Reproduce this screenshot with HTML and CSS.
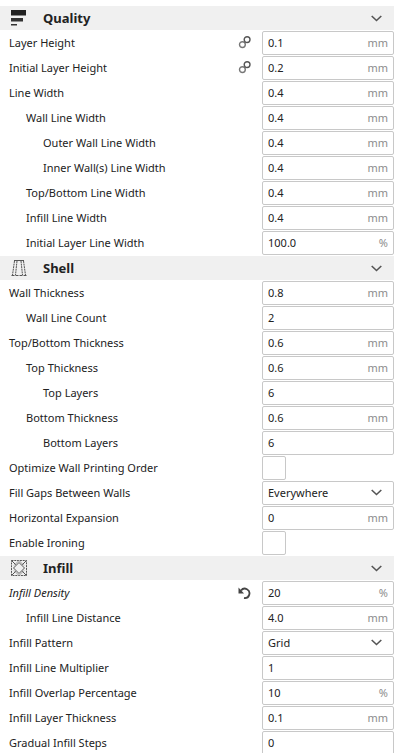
FILE: index.html
```html
<!DOCTYPE html>
<html lang="en">
<head>
  <meta charset="UTF-8" />
  <meta name="viewport" content="width=device-width, initial-scale=1" />
  <title>Print Settings</title>
  <link rel="stylesheet" href="styles.css">
</head>
<body>
  <svg class="defs" width="0" height="0">
    <symbol id="chev" viewBox="0 0 11 7"><path d="M.7 1 5.500 5.500 10.300 1" fill="none" stroke="#555" stroke-width="1.6"/></symbol>
    <symbol id="link" viewBox="0 0 13 13">
      <g fill="none" stroke-width="1.4">
        <circle cx="4.400" cy="8.600" r="2.900" stroke="#777"/>
        <circle cx="9.100" cy="3.600" r="2.900" stroke="#555"/>
      </g>
    </symbol>
  </svg>

  <div class="panel">
    <div class="section">
      <svg class="section-icon" viewBox="0 0 16 16">
        <rect x="0" y="0" width="15" height="5.500" fill="#222"/>
        <rect x="0" y="8" width="12" height="3.500" fill="#333"/>
        <rect x="0" y="14" width="6" height="1.500" fill="#333"/>
      </svg>
      <span class="section-title">Quality</span>
      <svg class="section-chev"><use href="#chev"/></svg>
    </div>
    <div class="row"><span class="label">Layer Height</span><svg class="action"><use href="#link"/></svg><div class="field"><span>0.1</span><em>mm</em></div></div>
    <div class="row"><span class="label">Initial Layer Height</span><svg class="action"><use href="#link"/></svg><div class="field"><span>0.2</span><em>mm</em></div></div>
    <div class="row"><span class="label">Line Width</span><div class="field"><span>0.4</span><em>mm</em></div></div>
    <div class="row"><span class="label l1">Wall Line Width</span><div class="field"><span>0.4</span><em>mm</em></div></div>
    <div class="row"><span class="label l2">Outer Wall Line Width</span><div class="field"><span>0.4</span><em>mm</em></div></div>
    <div class="row"><span class="label l2">Inner Wall(s) Line Width</span><div class="field"><span>0.4</span><em>mm</em></div></div>
    <div class="row"><span class="label l1">Top/Bottom Line Width</span><div class="field"><span>0.4</span><em>mm</em></div></div>
    <div class="row"><span class="label l1">Infill Line Width</span><div class="field"><span>0.4</span><em>mm</em></div></div>
    <div class="row"><span class="label l1">Initial Layer Line Width</span><div class="field"><span>100.0</span><em>%</em></div></div>

    <div class="section">
      <svg class="section-icon" viewBox="0 0 16 16">
        <g fill="none" stroke="#555" stroke-width="1">
          <path d="M3 .5H13"/>
          <path d="M3.500 1 1.500 15M12.500 1 14.500 15" stroke-dasharray="2 .6"/>
          <path d="M6 1 4.500 15M10 1 11.500 15" stroke-dasharray="2 .6"/>
          <path d="M.5 15.500H15.500" stroke-dasharray="3 1"/>
        </g>
      </svg>
      <span class="section-title">Shell</span>
      <svg class="section-chev"><use href="#chev"/></svg>
    </div>
    <div class="row"><span class="label">Wall Thickness</span><div class="field"><span>0.8</span><em>mm</em></div></div>
    <div class="row"><span class="label l1">Wall Line Count</span><div class="field"><span>2</span></div></div>
    <div class="row"><span class="label">Top/Bottom Thickness</span><div class="field"><span>0.6</span><em>mm</em></div></div>
    <div class="row"><span class="label l1">Top Thickness</span><div class="field"><span>0.6</span><em>mm</em></div></div>
    <div class="row"><span class="label l2">Top Layers</span><div class="field"><span>6</span></div></div>
    <div class="row"><span class="label l1">Bottom Thickness</span><div class="field"><span>0.6</span><em>mm</em></div></div>
    <div class="row"><span class="label l2">Bottom Layers</span><div class="field"><span>6</span></div></div>
    <div class="row"><span class="label">Optimize Wall Printing Order</span><div class="check"></div></div>
    <div class="row"><span class="label">Fill Gaps Between Walls</span><div class="field"><span>Everywhere</span><svg class="select-chev"><use href="#chev"/></svg></div></div>
    <div class="row"><span class="label">Horizontal Expansion</span><div class="field"><span>0</span><em>mm</em></div></div>
    <div class="row"><span class="label">Enable Ironing</span><div class="check"></div></div>

    <div class="section">
      <svg class="section-icon" viewBox="0 0 16 16">
        <g fill="none" stroke="#555" stroke-width="1">
          <rect x=".5" y=".5" width="15" height="15" stroke-dasharray="2 .8"/>
          <path d="M8 2.500 13.500 8 8 13.500 2.500 8Z"/>
          <path d="M.5 .5 5 5M15.500 .5 11 5M.5 15.500 5 11M15.500 15.500 11 11"/>
          <path d="M8 .5 3 5.500M8 .5 13 5.500M8 15.500 3 10.500M8 15.500 13 10.500" stroke="#999"/>
        </g>
      </svg>
      <span class="section-title">Infill</span>
      <svg class="section-chev"><use href="#chev"/></svg>
    </div>
    <div class="row"><span class="label changed">Infill Density</span>
      <svg class="action" viewBox="0 0 13 13">
        <path d="M3 4.500A4.700 4.700 0 1 1 6 12" fill="none" stroke="#444" stroke-width="1.800"/>
        <path d="M.5 1.500V7.500H6Z" fill="#444"/>
      </svg>
      <div class="field"><span>20</span><em>%</em></div></div>
    <div class="row"><span class="label l1">Infill Line Distance</span><div class="field"><span>4.0</span><em>mm</em></div></div>
    <div class="row"><span class="label">Infill Pattern</span><div class="field"><span>Grid</span><svg class="select-chev"><use href="#chev"/></svg></div></div>
    <div class="row"><span class="label">Infill Line Multiplier</span><div class="field"><span>1</span></div></div>
    <div class="row"><span class="label">Infill Overlap Percentage</span><div class="field"><span>10</span><em>%</em></div></div>
    <div class="row"><span class="label">Infill Layer Thickness</span><div class="field"><span>0.1</span><em>mm</em></div></div>
    <div class="row"><span class="label">Gradual Infill Steps</span><div class="field"><span>0</span></div></div>
  </div>
</body>
</html>
```

FILE: styles.css
```css
html, body {
  height: 753px;
  overflow: hidden;
}

body {
  margin: 0;
  padding: 0;
  background-color: white;
  font-family: "Noto Sans", sans-serif;
  font-size: 11px;
  color: #222;
}

.defs {
  display: block;
  height: 0;
}

.panel {
  width: 394px;
  padding-top: 6px;
}

.section {
  display: flex;
  align-items: center;
  height: 24px;
  margin-bottom: 1px;
  background-color: #f0f0f0;
}

.section-icon {
  width: 16px;
  height: 16px;
  margin-left: 11px;
  flex: none;
}

.section-title {
  margin-left: 16px;
  font-size: 13px;
  font-weight: bold;
}

.section-chev {
  width: 11px;
  height: 7px;
  margin-left: auto;
  margin-right: 12px;
}

.row {
  display: flex;
  align-items: center;
  height: 24px;
  margin-bottom: 1px;
  padding-left: 9px;
}

.label {
  flex: 1;
  padding-bottom: 2px;
  white-space: nowrap;
}

.l1 {
  padding-left: 17px;
}

.l2 {
  padding-left: 34px;
}

.changed {
  font-style: italic;
}

.action {
  width: 13px;
  height: 13px;
  margin-right: 11px;
  margin-bottom: 1px;
  flex: none;
}

.field {
  display: flex;
  align-items: center;
  justify-content: space-between;
  box-sizing: border-box;
  width: 132px;
  height: 24px;
  padding: 0 5px 2px;
  border: 1px solid #c8c8c8;
  border-radius: 2px;
  background: white;
  flex: none;
}

.field em {
  font-style: normal;
  color: #8c8c8c;
}

.select-chev {
  width: 11px;
  height: 7px;
  margin-right: 6px;
}

.check {
  box-sizing: border-box;
  width: 24px;
  height: 24px;
  margin-right: 108px;
  border: 1px solid #c8c8c8;
  border-radius: 2px;
  flex: none;
}
```
